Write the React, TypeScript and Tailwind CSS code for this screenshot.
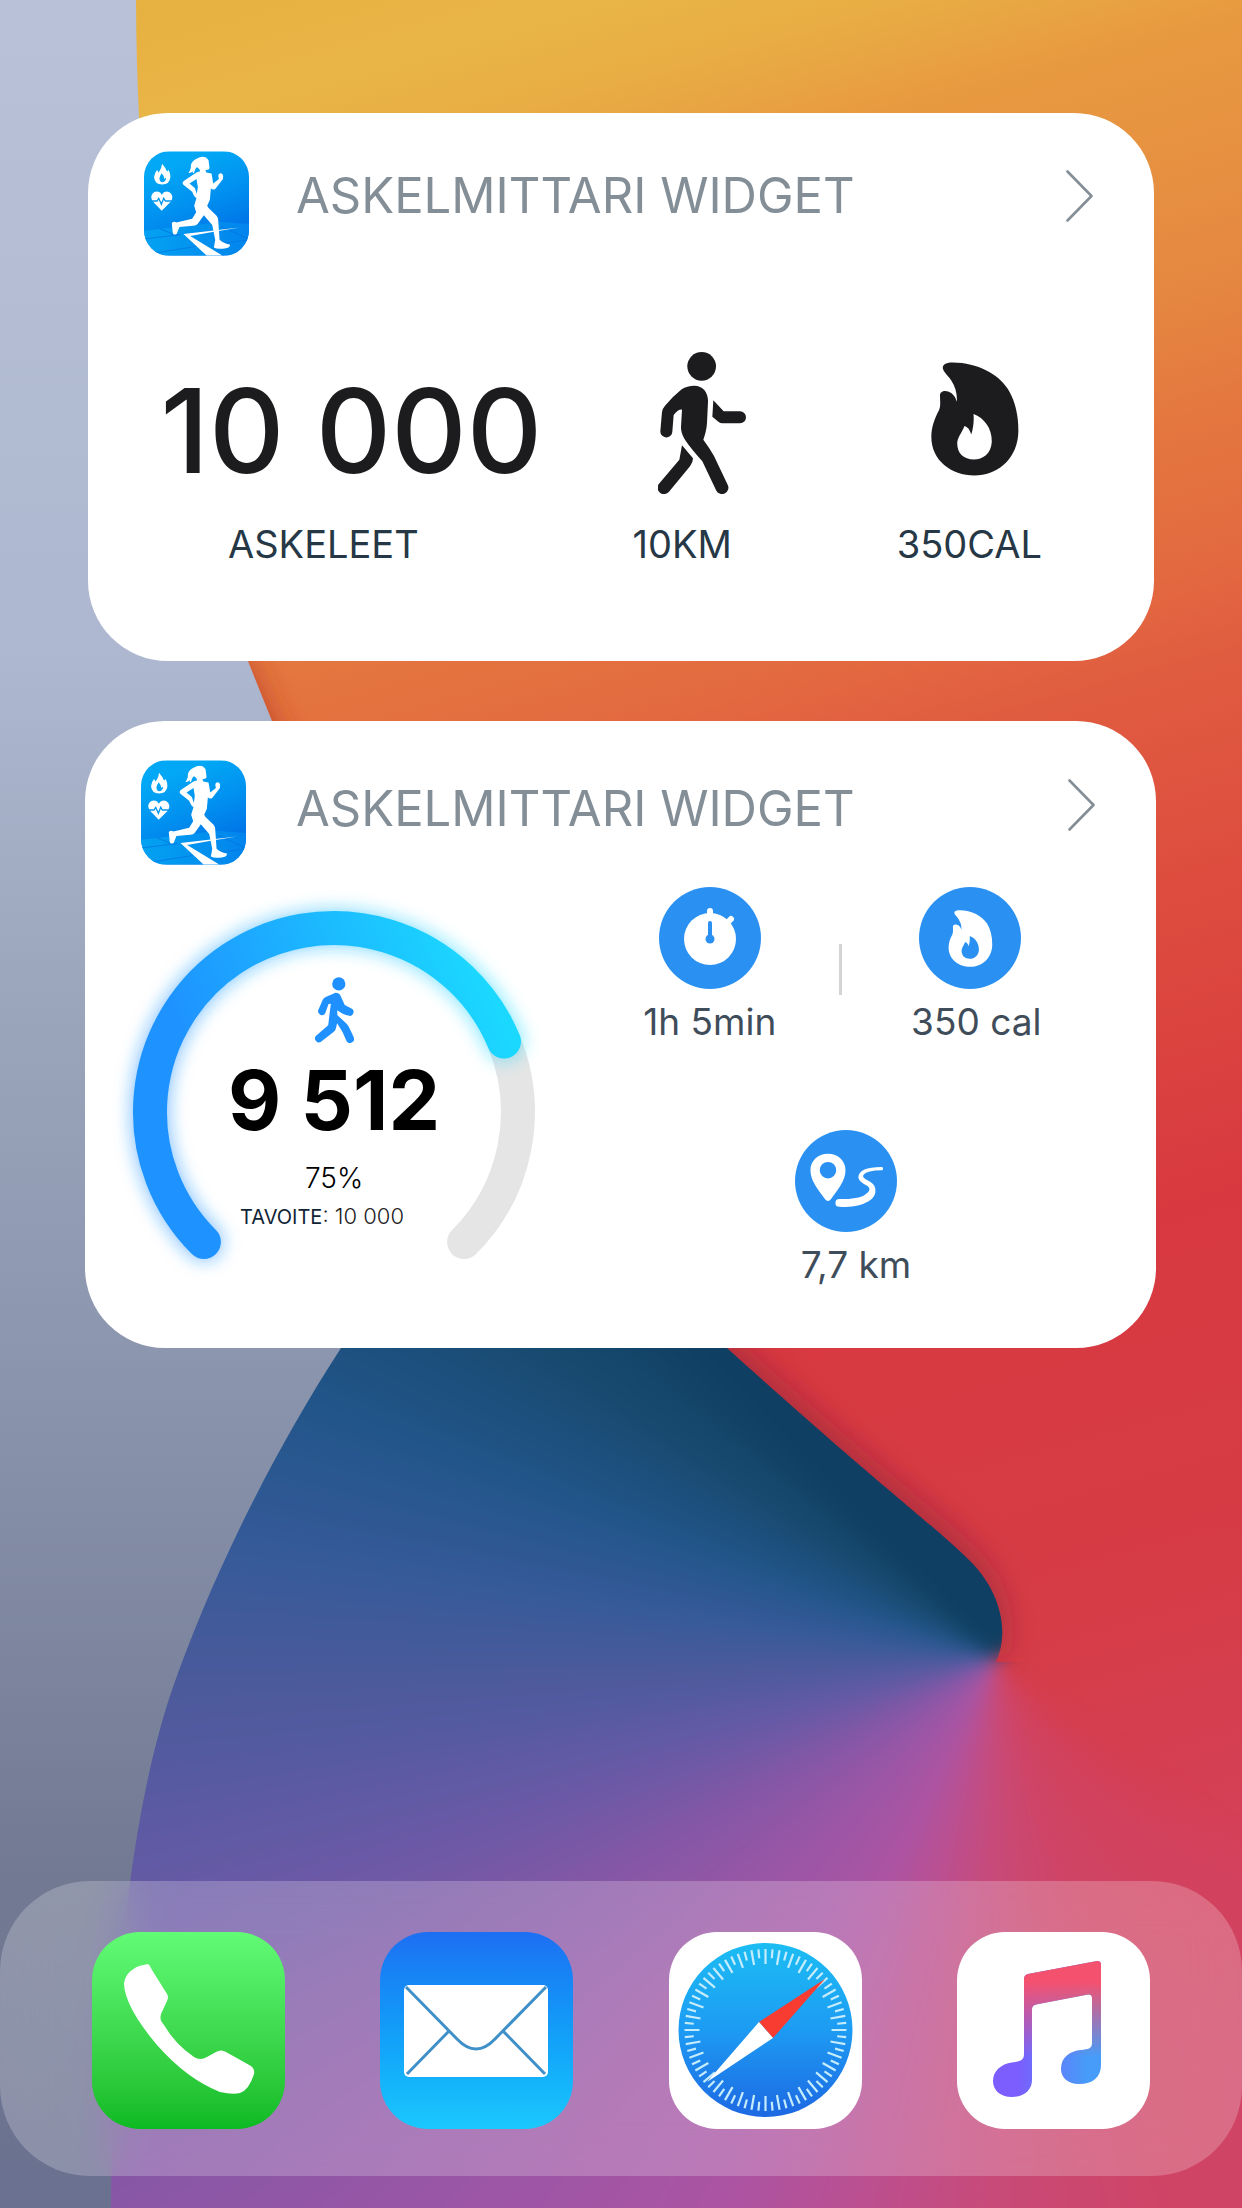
import type { ReactNode } from "react";

const TICKS = Array.from({ length: 72 }, (_, i) => i * 5);

function Wallpaper() {
  return (
    <svg
      className="absolute inset-0 h-full w-full"
      viewBox="0 0 1242 2208"
      preserveAspectRatio="xMidYMid slice"
      aria-hidden="true"
    >
      <defs>
        <linearGradient id="sky" x1="0" y1="0" x2="0" y2="1">
          <stop offset="0" stopColor="#b8c1d7" />
          <stop offset="0.3" stopColor="#adb7cf" />
          <stop offset="0.45" stopColor="#9ba5bc" />
          <stop offset="0.61" stopColor="#8c96ae" />
          <stop offset="0.85" stopColor="#727a93" />
          <stop offset="1" stopColor="#6a7190" />
        </linearGradient>
        <linearGradient id="sun" gradientUnits="userSpaceOnUse" x1="0" y1="0" x2="664" y2="2370">
          <stop offset="0" stopColor="#e7b040" />
          <stop offset="0.066" stopColor="#e9b546" />
          <stop offset="0.1" stopColor="#e8ad44" />
          <stop offset="0.14" stopColor="#e89a40" />
          <stop offset="0.235" stopColor="#e58941" />
          <stop offset="0.3" stopColor="#e4753f" />
          <stop offset="0.35" stopColor="#e36a40" />
          <stop offset="0.39" stopColor="#e05c40" />
          <stop offset="0.484" stopColor="#dd4b3e" />
          <stop offset="0.6" stopColor="#d83940" />
          <stop offset="0.75" stopColor="#d63c46" />
          <stop offset="0.87" stopColor="#d4415b" />
          <stop offset="1" stopColor="#ce4568" />
        </linearGradient>
        <clipPath id="sunShape">
          <path d="M136 0C137 250 172 480 248 661L272 721C380 960 520 1160 727 1348L600 2208H1242V0Z" />
        </clipPath>
        <clipPath id="waveShape">
          <path d="M620 1252C460 1252 380 1290 341 1348C262 1470 205 1595 172 1690C138 1790 112 1950 111 2208H1242V1662H996C1010 1632 1001 1590 967 1558C930 1522 880 1486 727 1348Z" />
        </clipPath>
        <filter id="soft" x="-30%" y="-30%" width="160%" height="160%">
          <feGaussianBlur stdDeviation="16" />
        </filter>
      </defs>
      <rect width="1242" height="2208" fill="url(#sky)" />
      <g clipPath="url(#sunShape)">
        <rect width="1242" height="2208" fill="url(#sun)" />
        <path
          d="M228 650L262 730L300 800"
          fill="none"
          stroke="#b3301f"
          strokeOpacity="0.8"
          strokeWidth="24"
          filter="url(#soft)"
        />
        <path
          d="M700 1330C870 1486 925 1522 960 1558C991 1590 998 1632 986 1655"
          fill="none"
          stroke="#7a1f35"
          strokeOpacity="0.65"
          strokeWidth="22"
          filter="url(#soft)"
        />
      </g>
      <g clipPath="url(#waveShape)">
        <foreignObject x="-60" y="-60" width="1362" height="2328">
          <div className="h-full w-full bg-[conic-gradient(at_1056px_1718px,#0f3f62_0deg,#0f3f62_60deg,#d4405a00_60deg,#d4405a00_125deg,#cf4465_162deg,#c84a78_180deg,#bb4f90_194deg,#ab54a3_207deg,#9856a6_228deg,#8457a6_241deg,#6b59a6_252deg,#5a5aa2_260deg,#4b5a9b_268deg,#365a98_278deg,#22558a_290deg,#184a70_304deg,#0f3f62_317deg,#0f3f62_360deg)] blur-[9px]" />
        </foreignObject>
      </g>
    </svg>
  );
}

function AppLogo() {
  return (
    <svg className="h-[105px] w-[105px] shrink-0 rounded-[26px]" viewBox="191 156 314 311" aria-hidden="true">
      <defs>
        <linearGradient id="logoBg" x1="0.2" y1="0" x2="0.6" y2="1">
          <stop offset="0.15" stopColor="#02a7f5" />
          <stop offset="0.5" stopColor="#0192f0" />
          <stop offset="0.85" stopColor="#0076e8" />
        </linearGradient>
        <linearGradient id="logoFloor" x1="0" y1="0" x2="1" y2="0">
          <stop offset="0" stopColor="#03a2f2" />
          <stop offset="1" stopColor="#0284ec" />
        </linearGradient>
      </defs>
      <rect x="191" y="156" width="314" height="311" fill="url(#logoBg)" />
      <path d="M191 393L420 367L505 373V467H191Z" fill="url(#logoFloor)" />
      <path
        d="M191 418L300 404M215 461L345 440M240 388L290 408M420 380L505 418M430 430L505 420"
        fill="none"
        stroke="#0272df"
        strokeWidth="3"
        strokeOpacity="0.7"
      />
      <path d="M309 403L400 392L478 383L400 396L329 409L425 467H378Z" fill="#fff" />
      <path
        d="M348 178Q372 164 384 182L387 205Q386 212 375 211L377 219L393 222L398 252L415 238Q410 222 420 221Q430 222 427 238L404 268Q396 272 391 266L388 300L380 318L384 325L408 348Q413 354 413 362L417 420Q432 433 448 434Q449 443 436 445Q410 449 400 443L404 420L395 376L370 347L352 372Q348 378 338 378L297 382L289 402Q280 408 277 400L274 370Q280 364 288 368L335 357L347 338L341 318L348 295Q342 294 335 276L308 255Q304 248 312 243L348 219L359 215Q358 208 350 203Q344 205 341 219Q338 224 336 215Q332 221 324 220Q333 207 331 198Q334 184 348 178Z"
        fill="#fff"
      />
      <path d="M327 252L348 238L352 262L349 283L343 265Z" fill="#029af2" />
      <path
        d="M245 193Q256 206 260 216L265 211Q270 222 270 233Q268 254 245 255Q223 254 221 233Q222 220 230 211L235 219Q244 208 245 193ZM244 221Q238 229 237 237Q238 248 246 248Q257 247 257 234L252 238Q251 229 244 221Z"
        fill="#fff"
        fillRule="evenodd"
      />
      <path d="M244 285Q252 272 266 277Q281 287 273 304L244 333L216 304Q207 287 222 277Q237 272 244 285Z" fill="#fff" />
      <path
        d="M210 304H230L235 296L243 314L250 296L255 304H280"
        fill="none"
        stroke="#0197f1"
        strokeWidth="4"
      />
    </svg>
  );
}

function WalkIcon() {
  return (
    <svg className="h-[142px] w-[88px]" viewBox="54 38 264 426" fill="#1c1c1e" aria-hidden="true">
      <circle cx="185" cy="81" r="43" />
      <path d="M163 139C189 139 205 160 204 187L201 250C200 270 194 290 190 301Q210 328 222 350L263 436A19 19 0 0 1 229 454L187 366Q150 325 134 300Q122 280 123 262L126 211Q116 209 101 227L97 277A18 18 0 0 1 61 276L66 218Q67 208 75 199Q100 170 125 150Q141 139 163 139Z" />
      <path d="M220 183L251 216H300A18 18 0 0 1 300 252H247Q241 252 236 248L217 232Z" />
      <path d="M126 318L159 357Q159 370 150 381L87 457A19 19 0 0 1 57 433L118 361Z" />
    </svg>
  );
}

function StrideIcon() {
  return (
    <svg className="h-[66px] w-[39px]" viewBox="71 48 118 200" fill="#1e90ff" aria-hidden="true">
      <circle cx="143" cy="69" r="20" />
      <path d="M133 96Q144 96 149 106L161 133L180 143A11 11 0 0 1 172 165Q158 163 138 149L139 164L166 189Q174 198 177 206L188 230A12 12 0 0 1 166 241L154 214L138 188L134 204Q133 210 127 215L91 243A12 12 0 0 1 75 225L111 194L115 160L119 129L112 130L102 158A12 12 0 0 1 80 150L94 118Q97 111 105 108Z" />
    </svg>
  );
}

function FlameIcon({ className }: { className: string }) {
  return (
    <svg className={className} viewBox="869 70 265 342" fill="currentColor" fillRule="evenodd" aria-hidden="true">
      <path d="M905 90C902 78 914 71 935 71C1010 72 1070 105 1100 150C1122 185 1133 230 1132 280C1130 360 1070 411 1000 411C930 411 870 365 870 295C870 265 880 240 893 215C899 200 896 185 896 172C895 155 915 153 930 163C938 169 943 177 947 189C948 165 943 145 930 125C920 110 907 100 905 90ZM997 226C1030 238 1053 270 1052 310C1050 345 1025 363 998 363C968 363 948 345 948 315C948 298 960 285 970 262C980 266 986 272 990 288C996 270 999 250 997 226Z" />
    </svg>
  );
}

function StopwatchIcon() {
  return (
    <svg className="h-full w-full" viewBox="0 0 102 102" aria-hidden="true">
      <circle cx="51" cy="52" r="26" fill="#fff" />
      <path d="M51 24V30M69 35L72 32" stroke="#fff" strokeWidth="6" strokeLinecap="round" />
      <path d="M51 36V52" stroke="#2a91f3" strokeWidth="4" strokeLinecap="round" />
      <circle cx="51" cy="52" r="4.5" fill="#2a91f3" />
    </svg>
  );
}

function RouteIcon() {
  return (
    <svg className="h-full w-full" viewBox="0 0 99 99" fill="#fff" aria-hidden="true">
      <path
        d="M32 23C42 23 49 30 49 39C49 49 42 57 35 67Q32 71 29 67C22 57 15 49 15 39C15 30 22 23 32 23ZM32 31A8 8 0 1 0 32 47A8 8 0 1 0 32 31Z"
        fillRule="evenodd"
      />
      <path d="M84 36Q62 36 61.500 46Q62 50 70 54Q76 58 66 64Q57 67.500 43 67A3.600 3.600 0 0 0 43 74.500Q60 76 71 69.500Q79 65 78 57Q77.500 52 69 48Q65 46 66.500 43.500Q70 39 84 39A1.500 1.500 0 0 0 84 36Z" />
    </svg>
  );
}

function Gauge() {
  return (
    <svg className="col-start-1 row-start-1 w-full overflow-visible" viewBox="0 0 402 349" fill="none" aria-hidden="true">
      <defs>
        <linearGradient id="gauge" gradientUnits="userSpaceOnUse" x1="50" y1="220" x2="360" y2="90">
          <stop offset="0.1" stopColor="#1e92ff" />
          <stop offset="0.55" stopColor="#1cb4ff" />
          <stop offset="1" stopColor="#1bd8ff" />
        </linearGradient>
        <filter id="glow" x="-20%" y="-20%" width="140%" height="140%">
          <feGaussianBlur stdDeviation="9" />
        </filter>
      </defs>
      <path d="M371 131A184 184 0 0 1 331.100 331.100" stroke="#e5e5e5" strokeWidth="34" strokeLinecap="round" />
      <path
        d="M70.900 331.100A184 184 0 1 1 371 130.600"
        stroke="url(#gauge)"
        strokeOpacity="0.6"
        strokeWidth="36"
        strokeLinecap="round"
        filter="url(#glow)"
      />
      <path
        d="M70.900 331.100A184 184 0 1 1 371 130.600"
        stroke="url(#gauge)"
        strokeWidth="34"
        strokeLinecap="round"
      />
    </svg>
  );
}

function WidgetHeader({ titleClass }: { titleClass: string }) {
  return (
    <header className="flex items-start">
      <AppLogo />
      <h2 className={`flex-1 text-[49px] text-[#848e97] ${titleClass}`}>ASKELMITTARI WIDGET</h2>
      <a href="#" aria-label="Avaa widget" className="flex h-[90px] items-center">
        <svg className="h-[52px] w-[27px]" viewBox="0 0 27 52" fill="none" aria-hidden="true">
          <path
            d="M1.500 1.500L25.500 26L1.500 50.500"
            stroke="#848e97"
            strokeWidth="2.600"
            strokeLinecap="round"
            strokeLinejoin="round"
          />
        </svg>
      </a>
    </header>
  );
}

function Metric({ label, labelClass, children }: { label: string; labelClass: string; children: ReactNode }) {
  return (
    <div className="flex flex-col items-center">
      <div className="flex h-[142px] items-start">{children}</div>
      <p className={`mt-[26px] text-[38px] leading-12 text-[#263746] ${labelClass}`}>{label}</p>
    </div>
  );
}

function Badge({ label, className, children }: { label: string; className?: string; children: ReactNode }) {
  return (
    <div className="flex flex-col items-center">
      <div className="flex h-[102px] w-[102px] items-center justify-center rounded-full bg-[#2a91f3] text-white">
        {children}
      </div>
      <p className={`mt-[11px] text-[37px] leading-11 text-[#3f4d5a] ${className ?? ""}`}>{label}</p>
    </div>
  );
}

function DockApp({ label, className, children }: { label: string; className: string; children: ReactNode }) {
  return (
    <a href="#" aria-label={label} className={`h-[197px] w-[193px] overflow-hidden rounded-[48px] ${className}`}>
      <svg className="h-full w-full" viewBox="0 0 193 197" aria-hidden="true">
        {children}
      </svg>
    </a>
  );
}

function Dock() {
  return (
    <nav className="relative mt-auto mb-8 flex justify-between rounded-[90px] bg-white/22 px-[92px] pt-[51px] pb-[47px] backdrop-blur-xl">
      <DockApp label="Puhelin" className="bg-linear-to-b from-[#62fb76] to-[#0cba22]">
        <path
          d="M56 32Q57 32 60 38L75 62Q77 65 75 69L69 82Q67 88 72 93Q83 112 102 125Q108 129 115 125L124 120Q129 117 134 120L159 134Q163 137 162 142Q157 158 148 161Q141 163 128 160Q95 147 65 113Q33 75 32 52Q33 40 47 34Z"
          fill="#fff"
        />
      </DockApp>
      <DockApp label="Sähköposti" className="bg-linear-to-b from-[#1d6ff2] to-[#1bc8fd]">
        <rect x="24" y="53" width="144" height="92" rx="5" fill="#fff" />
        <path
          d="M26 55L77 107Q96 127 115 107L166 55M69 99L27 142M123 99L165 142"
          fill="none"
          stroke="#3f8fc8"
          strokeWidth="3"
        />
      </DockApp>
      <DockApp label="Safari" className="bg-white">
        <defs>
          <linearGradient id="compass" x1="0" y1="0" x2="0" y2="1">
            <stop offset="0" stopColor="#1cbdf3" />
            <stop offset="0.5" stopColor="#1d9bf3" />
            <stop offset="1" stopColor="#1d68e2" />
          </linearGradient>
        </defs>
        <circle cx="96.500" cy="98" r="87" fill="url(#compass)" />
        {TICKS.map((deg) => (
          <path
            key={deg}
            d={deg % 10 === 0 ? "M96.500 17V32" : "M96.500 17V26"}
            stroke="#c4ecfc"
            strokeWidth="2.200"
            transform={`rotate(${deg} 96.500 98)`}
          />
        ))}
        <path d="M156 47L90 90L104 106Z" fill="#f93c32" />
        <path d="M38 150L90 90L104 106Z" fill="#fff" />
      </DockApp>
      <DockApp label="Musiikki" className="bg-white">
        <defs>
          <linearGradient id="noteBase" gradientUnits="userSpaceOnUse" x1="60" y1="0" x2="130" y2="0">
            <stop offset="0" stopColor="#7c5dfd" />
            <stop offset="1" stopColor="#469cf8" />
          </linearGradient>
          <linearGradient id="noteTop" gradientUnits="userSpaceOnUse" x1="0" y1="50" x2="0" y2="125">
            <stop offset="0" stopColor="#f4516f" />
            <stop offset="1" stopColor="#f4516f" stopOpacity="0" />
          </linearGradient>
        </defs>
        {["url(#noteBase)", "url(#noteTop)"].map((fill) => (
          <path
            key={fill}
            d="M71 42L140 29Q144 28.500 144 33V133C144 145 136 152 122 152C110 152 104 145 104 137C104 125 113 119 124 118C131 117 135 117 135 111V66Q135 62 131 62.500L79 72.500Q75 73.500 75 77V148C75 158 67 165 55 165C43 165 36 158 36 149C36 139 44 132 55 130.500C62 129.500 67 129 67 122V47Q67 43 71 42Z"
            fill={fill}
          />
        ))}
      </DockApp>
    </nav>
  );
}

export default function App() {
  return (
    <main className="relative flex min-h-screen flex-col overflow-hidden pt-[113px] font-['Inter',sans-serif]">
      <Wallpaper />

      <section className="relative mx-[88px] rounded-[80px] bg-white pt-[38px] pr-[61px] pb-[93px] pl-[56px]">
        <WidgetHeader titleClass="ml-[47px] leading-[90px]" />
        <div className="-mr-1 mt-24 grid grid-cols-[400fr_304fr_244fr] pl-2">
          <Metric label="ASKELEET" labelClass="pr-14">
            <span className="text-[117px] leading-[158px] font-medium whitespace-nowrap text-[#1c1c1e]">10 000</span>
          </Metric>
          <Metric label="10KM" labelClass="pr-10">
            <WalkIcon />
          </Metric>
          <Metric label="350CAL" labelClass="pr-3">
            <FlameIcon className="mt-2.5 h-[114px] w-[88px] text-[#1c1c1e]" />
          </Metric>
        </div>
      </section>

      <section className="relative mr-[86px] ml-[85px] mt-[60px] rounded-[80px] bg-white pt-[39px] pr-[61px] pb-[61px] pl-[56px]">
        <WidgetHeader titleClass="ml-[50px] leading-[98px]" />
        <div className="-mr-1 mt-[22px] flex items-start justify-between">
          <div className="mt-6 -ml-2 grid w-[402px] shrink-0">
            <Gauge />
            <div className="col-start-1 row-start-1 flex flex-col items-center pt-[66px]">
              <StrideIcon />
              <p className="mt-2 text-[82px] leading-[100px] font-bold text-black">9 512</p>
              <p className="mt-[7px] text-[28px] leading-10 font-light text-black">75%</p>
              <p className="pr-6 text-[22px] leading-9 font-light text-[#1c1c1e]">
                <span className="text-[20px] font-normal text-[#0f2436]">TAVOITE</span>: 10 000
              </p>
            </div>
          </div>
          <div className="flex w-[518px] flex-col items-center">
            <div className="grid w-full grid-cols-[1fr_3px_1fr]">
              <Badge label="1h 5min">
                <StopwatchIcon />
              </Badge>
              <div className="mt-[57px] h-[51px] bg-[#d4d4d4]" />
              <Badge label="350 cal" className="pl-3">
                <FlameIcon className="h-[57px] w-[45px]" />
              </Badge>
            </div>
            <div className="mt-[86px] pl-3">
              <Badge label="7,7 km" className="pl-5">
                <RouteIcon />
              </Badge>
            </div>
          </div>
        </div>
      </section>

      <Dock />
    </main>
  );
}
